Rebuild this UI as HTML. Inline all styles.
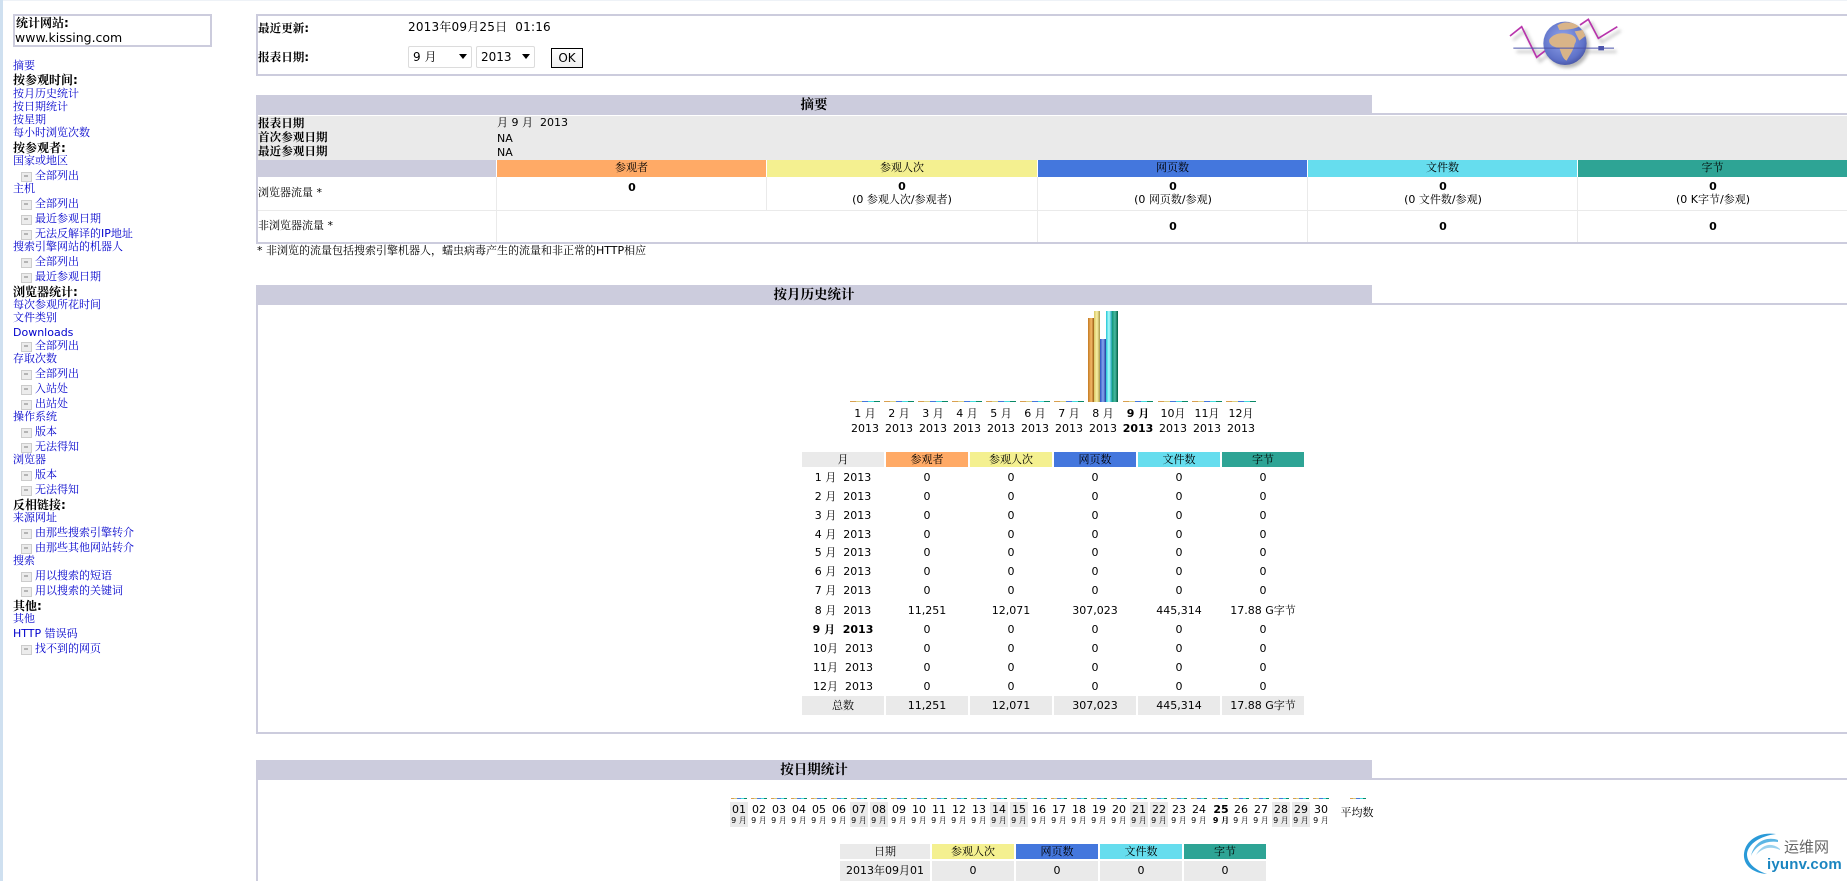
<!DOCTYPE html>
<html lang="zh">
<head>
<meta charset="utf-8">
<title>统计</title>
<style>
html,body{margin:0;padding:0;width:1847px;height:881px;overflow:hidden;background:#fff}
body{position:relative;font:11px/14px "DejaVu Sans","Noto Serif CJK SC","WenQuanYi Zen Hei",serif;color:#000}
div,a,span{box-sizing:border-box}
.a{position:absolute;white-space:nowrap}
.b{position:absolute;background:#ccccdd}
.l{position:absolute;left:13px;white-space:nowrap;color:#0000cc;text-decoration:none;line-height:14px;margin-top:1px}
.s{left:35px}
.s::before{content:"";position:absolute;left:-14px;top:3px;width:9px;height:8px;background:#ececec;border:1px solid #cccccc}
.s::after{content:"";position:absolute;left:-11px;top:6px;width:4px;height:2px;background:#b4b4b4}
.h{position:absolute;left:13px;white-space:nowrap;font-weight:bold;line-height:14px;font-size:12px}
.c{position:absolute;white-space:nowrap;text-align:center;transform:translateX(-50%);line-height:14px}
.t{font-weight:bold}
.tl{font-weight:bold;font-size:11.6px}
.hd{position:absolute;left:256px;width:1116px;height:20px;background:#ccccdd;text-align:center;font-weight:bold;line-height:20px;font-size:13.5px}
.r{position:absolute;left:802px;display:flex;gap:2px;text-align:center}
.r span{display:block;width:82px;height:19px;line-height:19px;white-space:nowrap}
.q span{height:15px;line-height:15px}
.m{background:#eaeaea}
.o{background:#ffaa66}.y{background:#f4f090}.u{background:#4477dd}.n{background:#66ddee}.e{background:#2ea495}
.th{position:absolute;height:1px;width:30px;background:linear-gradient(90deg,#d9a050 0 6px,#ddd080 6px 12px,#4477dd 12px 18px,#44dddd 18px 24px,#088866 24px 30px)}
.tt{width:16px;background:linear-gradient(90deg,#d9a050 0 3px,#ddd080 3px 6px,#4477dd 6px 10px,#44dddd 10px 13px,#088866 13px 16px)}
.mo{position:absolute;top:406px;width:34px;text-align:center;line-height:15px;white-space:nowrap}
.d{position:absolute;top:802px;width:18px;height:25px;text-align:center;line-height:14px;padding-top:1px}
.d small{display:block;font-size:8px;line-height:10px;white-space:nowrap;margin-top:-1px}
.w{background:#eaeaea}
.sel{position:absolute;top:46px;height:22px;border:1px solid #dcdcdc;border-radius:2px;background:#fff;font-size:12px;line-height:20px;padding-left:4px;white-space:nowrap}
.sel i{position:absolute;top:7px;width:0;height:0;border-left:4.5px solid transparent;border-right:4.5px solid transparent;border-top:5px solid #000}
.bar{position:absolute}
</style>
</head>
<body>
<div class="a" style="left:0;top:0;width:1847px;height:1px;background:#eef2f7"></div>
<div class="a" style="left:0;top:0;width:2.5px;height:881px;background:#cfe0f0"></div>

<div class="a" style="left:13px;top:14px;width:199px;height:33px;border:2px solid #ccccdd"></div>
<div class="h" style="left:16px;top:16px">统计网站:</div>
<div class="a" style="left:15px;top:31px;font-size:12.5px">www.kissing.com</div>

<a class="l" style="top:58px">摘要</a>
<div class="h" style="top:73px">按参观时间:</div>
<a class="l" style="top:86px">按月历史统计</a>
<a class="l" style="top:99px">按日期统计</a>
<a class="l" style="top:112px">按星期</a>
<a class="l" style="top:125px">每小时浏览次数</a>
<div class="h" style="top:141px">按参观者:</div>
<a class="l" style="top:153px">国家或地区</a>
<a class="l s" style="top:168px">全部列出</a>
<a class="l" style="top:181px">主机</a>
<a class="l s" style="top:196px">全部列出</a>
<a class="l s" style="top:211px">最近参观日期</a>
<a class="l s" style="top:226px">无法反解译的IP地址</a>
<a class="l" style="top:239px">搜索引擎网站的机器人</a>
<a class="l s" style="top:254px">全部列出</a>
<a class="l s" style="top:269px">最近参观日期</a>
<div class="h" style="top:285px">浏览器统计:</div>
<a class="l" style="top:297px">每次参观所花时间</a>
<a class="l" style="top:310px">文件类别</a>
<a class="l" style="top:325px">Downloads</a>
<a class="l s" style="top:338px">全部列出</a>
<a class="l" style="top:351px">存取次数</a>
<a class="l s" style="top:366px">全部列出</a>
<a class="l s" style="top:381px">入站处</a>
<a class="l s" style="top:396px">出站处</a>
<a class="l" style="top:409px">操作系统</a>
<a class="l s" style="top:424px">版本</a>
<a class="l s" style="top:439px">无法得知</a>
<a class="l" style="top:452px">浏览器</a>
<a class="l s" style="top:467px">版本</a>
<a class="l s" style="top:482px">无法得知</a>
<div class="h" style="top:498px">反相链接:</div>
<a class="l" style="top:510px">来源网址</a>
<a class="l s" style="top:525px">由那些搜索引擎转介</a>
<a class="l s" style="top:540px">由那些其他网站转介</a>
<a class="l" style="top:553px">搜索</a>
<a class="l s" style="top:568px">用以搜索的短语</a>
<a class="l s" style="top:583px">用以搜索的关键词</a>
<div class="h" style="top:599px">其他:</div>
<a class="l" style="top:611px">其他</a>
<a class="l" style="top:626px">HTTP 错误码</a>
<a class="l s" style="top:641px">找不到的网页</a>

<!-- top box -->
<div class="b" style="left:256px;top:14px;width:1591px;height:2px"></div>
<div class="b" style="left:256px;top:74px;width:1591px;height:2px"></div>
<div class="b" style="left:256px;top:14px;width:2px;height:62px"></div>
<div class="a tl" style="left:258px;top:21px">最近更新:</div>
<div class="a" style="left:408px;top:20px;font-size:12px;letter-spacing:.2px">2013年09月25日&nbsp; 01:16</div>
<div class="a tl" style="left:258px;top:50px">报表日期:</div>
<div class="sel" style="left:408px;width:64px">9 月<i style="left:50px"></i></div>
<div class="sel" style="left:476px;width:59px">2013<i style="left:45px"></i></div>
<div class="a" style="left:551px;top:48px;width:32px;height:20px;border:1px solid #000;background:linear-gradient(#fff,#eee);text-align:center;font-size:12px;line-height:18px">OK</div>

<svg class="a" style="left:1480px;top:10px" width="160" height="70" viewBox="0 0 480 210">
<defs>
<radialGradient id="g" cx=".45" cy=".4" r=".7"><stop offset="0" stop-color="#93a6ec"/><stop offset=".7" stop-color="#5f72c8"/><stop offset="1" stop-color="#3a4494"/></radialGradient>
<filter id="f"><feGaussianBlur stdDeviation="5"/></filter>
</defs>
<g fill="none" stroke="#aaa" stroke-width="8" filter="url(#f)" opacity=".6">
<polyline points="100,90 135,62 180,154 215,127"/>
<polyline points="310,57 335,40 365,97 422,62"/>
<path d="M110 125H410"/>
</g>
<circle cx="262" cy="108" r="66" fill="#888" filter="url(#f)" opacity=".6"/>
<polyline points="90,78 125,50 170,142 205,115" fill="none" stroke="#b834ac" stroke-width="5"/>
<polyline points="300,45 325,28 355,85 412,50" fill="none" stroke="#b834ac" stroke-width="5"/>
<circle cx="255" cy="100" r="65" fill="url(#g)"/>
<path d="M208 88C222 68 250 66 274 74C288 80 292 92 284 102C280 122 267 138 260 152C248 148 244 128 238 114C222 112 204 104 208 88Z" fill="#d9b488"/>
<path d="M232 46C252 32 282 36 296 50C284 58 252 60 238 60Z" fill="#d9b488"/>
<path d="M284 64L308 60L316 78L298 92Z" fill="#d9b488"/>
<path d="M100 113H355V108H372V113H402V116H372V121H355V116H100Z" fill="#4c54ac"/>
</svg>

<!-- summary -->
<div class="hd" style="top:95px">摘要</div>
<div class="b" style="left:1372px;top:113px;width:475px;height:2px"></div>
<div class="b" style="left:256px;top:115px;width:2px;height:129px"></div>
<div class="b" style="left:256px;top:242px;width:1591px;height:2px"></div>
<div class="a" style="left:258px;top:116px;width:1589px;height:44px;background:#eaeaea"></div>
<div class="a tl" style="left:258px;top:116px">报表日期</div>
<div class="a" style="left:497px;top:116px">月 9 月&nbsp; 2013</div>
<div class="a tl" style="left:258px;top:130px">首次参观日期</div>
<div class="a" style="left:497px;top:132px">NA</div>
<div class="a tl" style="left:258px;top:144px">最近参观日期</div>
<div class="a" style="left:497px;top:146px">NA</div>
<div class="a" style="left:256px;top:160px;width:240px;height:17px;background:#ccccdd"></div>
<div class="a o" style="left:497px;top:160px;width:269px;height:17px;text-align:center;line-height:16px">参观者</div>
<div class="a y" style="left:767px;top:160px;width:270px;height:17px;text-align:center;line-height:16px">参观人次</div>
<div class="a u" style="left:1038px;top:160px;width:269px;height:17px;text-align:center;line-height:16px">网页数</div>
<div class="a n" style="left:1308px;top:160px;width:269px;height:17px;text-align:center;line-height:16px">文件数</div>
<div class="a e" style="left:1578px;top:160px;width:269px;height:17px;text-align:center;line-height:16px">字节</div>
<div class="a" style="left:258px;top:210px;width:1589px;height:1px;background:#eaeaea"></div>
<div class="a" style="left:496px;top:177px;width:1px;height:65px;background:#eaeaea"></div>
<div class="a" style="left:766px;top:177px;width:1px;height:33px;background:#eaeaea"></div>
<div class="a" style="left:1037px;top:177px;width:1px;height:65px;background:#eaeaea"></div>
<div class="a" style="left:1307px;top:177px;width:1px;height:65px;background:#eaeaea"></div>
<div class="a" style="left:1577px;top:177px;width:1px;height:65px;background:#eaeaea"></div>
<div class="a" style="left:258px;top:186px">浏览器流量 *</div>
<div class="a" style="left:258px;top:219px">非浏览器流量 *</div>
<div class="c t" style="left:632px;top:181px">0</div>
<div class="c t" style="left:902px;top:180px">0</div>
<div class="c" style="left:902px;top:193px">(0 参观人次/参观者)</div>
<div class="c t" style="left:1173px;top:180px">0</div>
<div class="c" style="left:1173px;top:193px">(0 网页数/参观)</div>
<div class="c t" style="left:1443px;top:180px">0</div>
<div class="c" style="left:1443px;top:193px">(0 文件数/参观)</div>
<div class="c t" style="left:1713px;top:180px">0</div>
<div class="c" style="left:1713px;top:193px">(0 K字节/参观)</div>
<div class="c t" style="left:1173px;top:220px">0</div>
<div class="c t" style="left:1443px;top:220px">0</div>
<div class="c t" style="left:1713px;top:220px">0</div>
<div class="a" style="left:257px;top:244px">* 非浏览的流量包括搜索引擎机器人，蠕虫病毒产生的流量和非正常的HTTP相应</div>

<!-- monthly -->
<div class="hd" style="top:285px">按月历史统计</div>
<div class="b" style="left:1372px;top:303px;width:475px;height:2px"></div>
<div class="b" style="left:256px;top:305px;width:2px;height:429px"></div>
<div class="b" style="left:256px;top:732px;width:1591px;height:2px"></div>

<div class="th" style="left:850px;top:401px"></div>
<div class="th" style="left:884px;top:401px"></div>
<div class="th" style="left:918px;top:401px"></div>
<div class="th" style="left:952px;top:401px"></div>
<div class="th" style="left:986px;top:401px"></div>
<div class="th" style="left:1020px;top:401px"></div>
<div class="th" style="left:1054px;top:401px"></div>
<div class="th" style="left:1123px;top:401px"></div>
<div class="th" style="left:1158px;top:401px"></div>
<div class="th" style="left:1192px;top:401px"></div>
<div class="th" style="left:1226px;top:401px"></div>
<div class="bar" style="left:1088px;top:318px;width:6px;height:84px;background:linear-gradient(90deg,#c47a20,#f4b868 55%,#9a5c10)"></div>
<div class="bar" style="left:1094px;top:311px;width:6px;height:91px;background:linear-gradient(90deg,#d8c868,#faf0a4 50%,#a89848)"></div>
<div class="bar" style="left:1100px;top:339px;width:6px;height:63px;background:linear-gradient(90deg,#2a50c0,#88a8f0 50%,#1c3c9c)"></div>
<div class="bar" style="left:1106px;top:311px;width:6px;height:91px;background:linear-gradient(90deg,#20c4d4,#b0ffff 50%,#189cac)"></div>
<div class="bar" style="left:1112px;top:311px;width:6px;height:91px;background:linear-gradient(90deg,#109878,#48b8a0 50%,#005c40)"></div>

<div class="mo" style="left:848px">1 月<br>2013</div>
<div class="mo" style="left:882px">2 月<br>2013</div>
<div class="mo" style="left:916px">3 月<br>2013</div>
<div class="mo" style="left:950px">4 月<br>2013</div>
<div class="mo" style="left:984px">5 月<br>2013</div>
<div class="mo" style="left:1018px">6 月<br>2013</div>
<div class="mo" style="left:1052px">7 月<br>2013</div>
<div class="mo" style="left:1086px">8 月<br>2013</div>
<div class="mo t" style="left:1121px">9 月<br>2013</div>
<div class="mo" style="left:1156px">10月<br>2013</div>
<div class="mo" style="left:1190px">11月<br>2013</div>
<div class="mo" style="left:1224px">12月<br>2013</div>

<div class="r q" style="top:452px"><span class="m">月</span><span class="o">参观者</span><span class="y">参观人次</span><span class="u">网页数</span><span class="n">文件数</span><span class="e">字节</span></div>
<div class="r" style="top:468px"><span>1 月&nbsp; 2013</span><span>0</span><span>0</span><span>0</span><span>0</span><span>0</span></div>
<div class="r" style="top:487px"><span>2 月&nbsp; 2013</span><span>0</span><span>0</span><span>0</span><span>0</span><span>0</span></div>
<div class="r" style="top:506px"><span>3 月&nbsp; 2013</span><span>0</span><span>0</span><span>0</span><span>0</span><span>0</span></div>
<div class="r" style="top:525px"><span>4 月&nbsp; 2013</span><span>0</span><span>0</span><span>0</span><span>0</span><span>0</span></div>
<div class="r" style="top:543px"><span>5 月&nbsp; 2013</span><span>0</span><span>0</span><span>0</span><span>0</span><span>0</span></div>
<div class="r" style="top:562px"><span>6 月&nbsp; 2013</span><span>0</span><span>0</span><span>0</span><span>0</span><span>0</span></div>
<div class="r" style="top:581px"><span>7 月&nbsp; 2013</span><span>0</span><span>0</span><span>0</span><span>0</span><span>0</span></div>
<div class="r" style="top:601px"><span>8 月&nbsp; 2013</span><span>11,251</span><span>12,071</span><span>307,023</span><span>445,314</span><span>17.88 G字节</span></div>
<div class="r" style="top:620px"><span class="t">9 月&nbsp; 2013</span><span>0</span><span>0</span><span>0</span><span>0</span><span>0</span></div>
<div class="r" style="top:639px"><span>10月&nbsp; 2013</span><span>0</span><span>0</span><span>0</span><span>0</span><span>0</span></div>
<div class="r" style="top:658px"><span>11月&nbsp; 2013</span><span>0</span><span>0</span><span>0</span><span>0</span><span>0</span></div>
<div class="r" style="top:677px"><span>12月&nbsp; 2013</span><span>0</span><span>0</span><span>0</span><span>0</span><span>0</span></div>
<div class="r" style="top:696px"><span class="m">总数</span><span class="m">11,251</span><span class="m">12,071</span><span class="m">307,023</span><span class="m">445,314</span><span class="m">17.88 G字节</span></div>

<!-- daily -->
<div class="hd" style="top:760px">按日期统计</div>
<div class="b" style="left:1372px;top:778px;width:475px;height:2px"></div>
<div class="b" style="left:256px;top:780px;width:2px;height:101px"></div>

<div class="th tt" style="left:731px;top:798px"></div><div class="d w" style="left:730px">01<small>9 月</small></div>
<div class="th tt" style="left:751px;top:798px"></div><div class="d" style="left:750px">02<small>9 月</small></div>
<div class="th tt" style="left:771px;top:798px"></div><div class="d" style="left:770px">03<small>9 月</small></div>
<div class="th tt" style="left:791px;top:798px"></div><div class="d" style="left:790px">04<small>9 月</small></div>
<div class="th tt" style="left:811px;top:798px"></div><div class="d" style="left:810px">05<small>9 月</small></div>
<div class="th tt" style="left:831px;top:798px"></div><div class="d" style="left:830px">06<small>9 月</small></div>
<div class="th tt" style="left:851px;top:798px"></div><div class="d w" style="left:850px">07<small>9 月</small></div>
<div class="th tt" style="left:871px;top:798px"></div><div class="d w" style="left:870px">08<small>9 月</small></div>
<div class="th tt" style="left:891px;top:798px"></div><div class="d" style="left:890px">09<small>9 月</small></div>
<div class="th tt" style="left:911px;top:798px"></div><div class="d" style="left:910px">10<small>9 月</small></div>
<div class="th tt" style="left:931px;top:798px"></div><div class="d" style="left:930px">11<small>9 月</small></div>
<div class="th tt" style="left:951px;top:798px"></div><div class="d" style="left:950px">12<small>9 月</small></div>
<div class="th tt" style="left:971px;top:798px"></div><div class="d" style="left:970px">13<small>9 月</small></div>
<div class="th tt" style="left:991px;top:798px"></div><div class="d w" style="left:990px">14<small>9 月</small></div>
<div class="th tt" style="left:1011px;top:798px"></div><div class="d w" style="left:1010px">15<small>9 月</small></div>
<div class="th tt" style="left:1031px;top:798px"></div><div class="d" style="left:1030px">16<small>9 月</small></div>
<div class="th tt" style="left:1051px;top:798px"></div><div class="d" style="left:1050px">17<small>9 月</small></div>
<div class="th tt" style="left:1071px;top:798px"></div><div class="d" style="left:1070px">18<small>9 月</small></div>
<div class="th tt" style="left:1091px;top:798px"></div><div class="d" style="left:1090px">19<small>9 月</small></div>
<div class="th tt" style="left:1111px;top:798px"></div><div class="d" style="left:1110px">20<small>9 月</small></div>
<div class="th tt" style="left:1131px;top:798px"></div><div class="d w" style="left:1130px">21<small>9 月</small></div>
<div class="th tt" style="left:1151px;top:798px"></div><div class="d w" style="left:1150px">22<small>9 月</small></div>
<div class="th tt" style="left:1171px;top:798px"></div><div class="d" style="left:1170px">23<small>9 月</small></div>
<div class="th tt" style="left:1191px;top:798px"></div><div class="d" style="left:1190px">24<small>9 月</small></div>
<div class="th tt" style="left:1212px;top:798px"></div><div class="d t" style="left:1211px;width:20px">25<small>9 月</small></div>
<div class="th tt" style="left:1233px;top:798px"></div><div class="d" style="left:1232px">26<small>9 月</small></div>
<div class="th tt" style="left:1253px;top:798px"></div><div class="d" style="left:1252px">27<small>9 月</small></div>
<div class="th tt" style="left:1273px;top:798px"></div><div class="d w" style="left:1272px">28<small>9 月</small></div>
<div class="th tt" style="left:1293px;top:798px"></div><div class="d w" style="left:1292px">29<small>9 月</small></div>
<div class="th tt" style="left:1313px;top:798px"></div><div class="d" style="left:1312px">30<small>9 月</small></div>
<div class="th tt" style="left:1350px;top:798px"></div>
<div class="c" style="left:1357px;top:806px">平均数</div>

<div class="r q" style="left:840px;top:844px;gap:2px"><span class="m" style="width:90px">日期</span><span class="y">参观人次</span><span class="u">网页数</span><span class="n">文件数</span><span class="e">字节</span></div>
<div class="r" style="left:840px;top:861px;gap:2px"><span class="m" style="width:90px;height:20px">2013年09月01</span><span class="m" style="height:20px">0</span><span class="m" style="height:20px">0</span><span class="m" style="height:20px">0</span><span class="m" style="height:20px">0</span></div>

<!-- watermark -->
<svg class="a" style="left:1740px;top:830px" width="45" height="50" viewBox="0 0 45 50">
<path d="M36 4C15 1 3 14 4 27C5 36 13 43 27 44C15 40 7 33 7 24C8 14 20 6 36 4Z" fill="#2a9ad8"/>
<path d="M38 10C26 6 14 12 11 26C15 16 26 10 38 12Z" fill="#5cb6e4"/>
<path d="M40 19C32 12 22 14 16 25C23 17 32 16 40 20Z" fill="#9ad2ee"/>
</svg>
<div class="a" style="left:1784px;top:838px;font-size:15px;line-height:17px;color:#666;font-family:'Noto Sans CJK SC',sans-serif">运维网</div>
<div class="a" style="left:1767px;top:856px;font-size:15px;line-height:18px;font-family:'Liberation Sans',sans-serif;font-weight:bold;color:#1a85c0;letter-spacing:.2px">iyunv.com</div>
</body>
</html>
